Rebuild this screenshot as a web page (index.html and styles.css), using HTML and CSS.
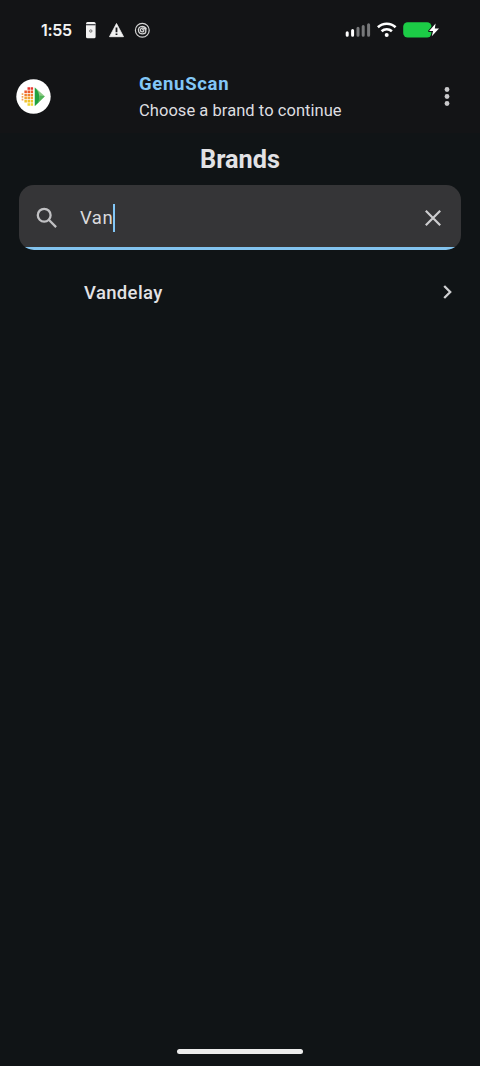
FILE: index.html
```html
<!DOCTYPE html>
<html lang="en">
<head>
<meta charset="utf-8">
<title>GenuScan</title>
<link rel="stylesheet" href="styles.css">
</head>
<body>
<div class="screen">
  <div class="top">
    <div class="status">
      <span class="clock">1:55</span>
      <svg class="notices" width="64" height="18" viewBox="86 21 64 18">
        <rect x="86" y="22" width="9.600" height="16.200" rx="1.500" fill="#f2f2f2"/>
        <path d="M86 24.700h9.600" stroke="#33353a" stroke-width="1.200"/>
        <circle cx="90.800" cy="31" r="1.200" fill="none" stroke="#666" stroke-width=".9"/>
        <path d="M116.500 23.500l7 13.200h-14z" fill="#f2f2f2" stroke="#f2f2f2" stroke-width=".8" stroke-linejoin="round"/>
        <path d="M116.500 27.600v4.600M116.500 33.400v1.700" stroke="#17181a" stroke-width="1.800"/>
        <g fill="none" stroke="#d4d4d4">
          <circle cx="142.300" cy="30.300" r="6.900" stroke-width="1.200"/>
          <path d="M142.300 30.300c0-1 1.500-1 1.500.3 0 2-3.500 1.600-3.500-.5 0-3 5.600-2.800 5.600.8 0 3.800-6.300 4-7.300.4-.8-2.700.8-5 3.500-5 2.300 0 3.900 1.300 4.300 3.200" stroke-width="1.300"/>
        </g>
      </svg>
      <svg class="signals" width="96" height="18" viewBox="345 21 96 18">
        <g stroke-width="3" stroke-linecap="round">
          <path d="M347.200 32.800v2.400M352.600 30.400v4.800" stroke="#fff"/>
          <path d="M358 28.200v7M363.200 26.400v8.800M368.600 24.700v10.500" stroke="#77787a"/>
        </g>
        <g fill="none" stroke="#fff" stroke-width="2.600">
          <path d="M377.900 27.300a13 13 0 0 1 17.700 0"/>
          <path d="M381.600 31.300a7.600 7.600 0 0 1 10.300 0"/>
        </g>
        <circle cx="386.700" cy="35" r="2" fill="#fff"/>
        <rect x="403.200" y="22.200" width="28.300" height="15.300" rx="4.500" fill="#1ccc46"/>
        <path d="M435.600 23.500l-6.500 7.600h4l-1.300 5.200 7.200-7.700h-4.200z" fill="#fff" stroke="#131416" stroke-width="2" paint-order="stroke" stroke-linejoin="round"/>
      </svg>
    </div>
    <header class="appbar">
      <svg class="logo" width="35" height="35" viewBox="0 0 35 35">
        <circle cx="17.500" cy="17.500" r="17.200" fill="#fff"/>
        <g fill="none" stroke-width="2.500" stroke-dasharray="2.500 .6">
          <path d="M11.500 9.500h6" stroke="#e8362c"/>
          <path d="M8.400 12.700h9.100" stroke="#ec5a2b"/>
          <path d="M8.400 15.900h9.100" stroke="#f07f2e"/>
          <path d="M8.400 19.100h9.100" stroke="#f2a233"/>
          <path d="M8.400 22.300h9.100" stroke="#f0c22c"/>
          <path d="M11.500 25.500h6" stroke="#f0d52e"/>
          <path d="M6.500 14.200v7.500" stroke="#f2a055" stroke-width="1.700" stroke-dasharray="1.800 1"/>
        </g>
        <path d="M18.800 8.200L28.800 17.300 18.800 27z" fill="#8cca86"/>
        <path d="M18.800 8.800C23 12.500 24.200 17 22.500 23.400L18.800 27z" fill="#1fa23f"/>
        <path d="M23.500 16.500l5.300.8-6.300 6.100z" fill="#4fb457"/>
      </svg>
      <div class="titles">
        <div class="name">GenuScan</div>
        <div class="hint">Choose a brand to continue</div>
      </div>
      <svg class="more" width="8" height="22" viewBox="0 0 8 22" fill="#c9c9cb"><circle cx="4" cy="3.500" r="2.400"/><circle cx="4" cy="10.500" r="2.400"/><circle cx="4" cy="17.500" r="2.400"/></svg>
    </header>
  </div>
  <main>
    <h1>Brands</h1>
    <div class="search">
      <svg width="22" height="22" viewBox="0 0 22 22" fill="none" stroke="#c1c1c3" stroke-width="2.300"><circle cx="8.200" cy="8.200" r="6.400"/><path d="M12.800 12.800l7.300 7.300"/></svg>
      <span class="query">Van</span><span class="caret"></span>
      <svg class="clear" width="18" height="18" viewBox="0 0 18 18" stroke="#cdcdcf" stroke-width="2.200"><path d="M1.800 1.800l14.400 14.400M16.200 1.800L1.800 16.200"/></svg>
    </div>
    <div class="row">
      <span>Vandelay</span>
      <svg width="10" height="14" viewBox="0 0 10 14" fill="none" stroke="#cfd0d2" stroke-width="2.300"><path d="M1.200 1L7.200 7l-6 6"/></svg>
    </div>
  </main>
  <div class="homebar"></div>
</div>
</body>
</html>
```
FILE: styles.css
```css
* { box-sizing: border-box; }
body { margin: 0; background: #101416; font-family: Roboto, sans-serif; color: #e2e2e5; }
.screen { height: 1066px; display: flex; flex-direction: column; }
.top { height: 133px; background: #131416; }
.status { height: 60px; display: flex; align-items: center; padding: 0 39px 0 41px; }
.clock { width: 45px; font: 600 16px/20px Inter, sans-serif; color: #f4f4f4; letter-spacing: -.3px; }
.signals { margin-left: auto; }
.appbar { height: 73px; display: flex; align-items: center; padding: 0 29px 0 16px; }
.titles { margin-left: 88px; padding-top: 2px; }
.name { font-size: 18.500px; line-height: 25px; font-weight: 700; letter-spacing: .7px; color: #82c7f7; }
.hint { font-size: 16.500px; line-height: 27px; letter-spacing: .05px; color: #dedee0; }
.more { margin-left: auto; }
main { flex: 1; display: flex; flex-direction: column; }
h1 { margin: 10px 0 9px; font-size: 25.300px; line-height: 33px; font-weight: 700; text-align: center; }
.search { height: 65px; margin: 0 19px; padding: 0 19px 0 17px; display: flex; align-items: center; border-radius: 15px; background: linear-gradient(#353537 62.500px, #82c3ee 62.500px); overflow: hidden; }
.query { margin-left: 22px; font-size: 18.500px; letter-spacing: .5px; color: #dadadc; }
.caret { width: 2px; height: 28px; background: #82c7f7; }
.clear { margin-left: auto; }
.row { height: 85px; padding: 0 27px 0 84px; display: flex; align-items: center; justify-content: space-between; font-size: 18.500px; font-weight: 500; letter-spacing: .35px; }
.row svg { margin-bottom: 1px; }
.homebar { width: 126px; height: 5px; margin: 0 auto 12px; border-radius: 3px; background: #ececec; }
```
